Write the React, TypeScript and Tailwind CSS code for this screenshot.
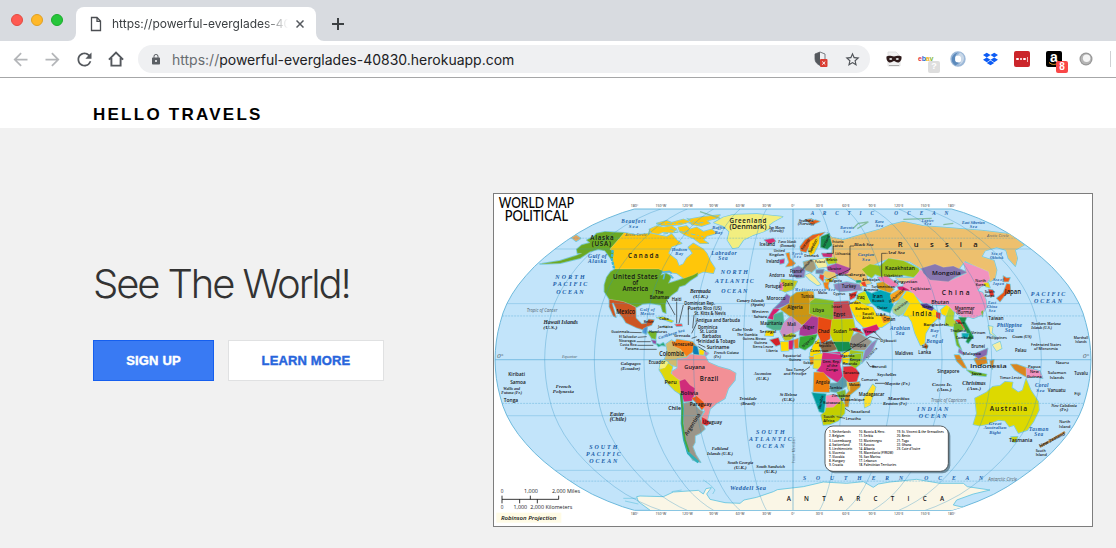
import React from "react";
import { MdArrowBack, MdArrowForward, MdRefresh, MdLock, MdStarBorder } from "react-icons/md";
import { FaDropbox } from "react-icons/fa";

type Shape = [fill: string, points: string];
type Label = [text: string, x: number, y: number, width: number, size?: number, kind?: string];

/* Robinson projection profile: [half width, distance from the equator] every 5 degrees */
const PX = [1, 0.9986, 0.9954, 0.99, 0.9822, 0.973, 0.96, 0.9427, 0.9216, 0.8962, 0.8679, 0.835, 0.7986, 0.7597, 0.7186, 0.6732, 0.6213, 0.5722, 0.5322];
const PY = [0, 0.062, 0.124, 0.186, 0.248, 0.31, 0.372, 0.434, 0.4958, 0.5571, 0.6176, 0.6769, 0.7346, 0.7903, 0.8435, 0.8936, 0.9394, 0.9761, 1];
const CX = 909, CY = 509, RX = 894, RY = 452;

function meridian(k: number): string[] {
  const pts: string[] = [];
  for (let i = 18; i >= 0; i--) pts.push(`${CX + k * RX * PX[i]},${CY - RY * PY[i]}`);
  for (let i = 1; i <= 18; i++) pts.push(`${CX + k * RX * PX[i]},${CY + RY * PY[i]}`);
  return pts;
}
const globe = [...meridian(-1), ...meridian(1).reverse()].join(" ");

const northWest: Shape[] = [
  ["#6aa823", "260,178 275,165 300,158 290,150 310,140 320,130 345,125 403,128 360,178 372,185 370,215 358,200 345,182 325,178 300,185 270,205 210,220 150,222 210,212 255,198 275,190 262,190"],
  ["#ffc60a", "403,128 440,135 480,130 530,140 545,132 560,150 575,160 545,170 535,190 560,210 567,228 580,222 590,205 608,190 595,172 610,160 640,178 650,190 662,215 675,235 670,250 640,245 625,252 600,262 585,268 560,250 520,245 505,237 375,237 368,215 372,185 360,178"],
  ["#ffc60a", "478,118 500,108 520,112 545,108 560,118 548,128 520,126 505,132 485,128"],
  ["#ffc60a", "500,100 530,92 545,98 580,88 600,95 570,104 540,106 515,106"],
  ["#ffc60a", "565,112 590,108 600,118 620,112 640,125 665,118 680,130 650,138 640,150 655,160 630,160 610,145 585,135 570,125"],
  ["#ffc60a", "595,88 640,80 690,75 680,85 650,92 660,100 635,108 605,103"],
  ["#6aa823", "375,237 505,237 520,243 512,256 528,250 545,258 535,280 560,272 585,264 610,255 625,247 622,258 600,272 585,285 568,290 562,303 545,315 530,330 526,345 528,370 518,365 512,345 480,340 458,342 440,352 420,343 400,335 358,328 343,305 343,285 350,262 362,245"],
  ["#cc5522", "358,328 400,335 420,343 437,352 438,385 455,402 470,400 476,388 492,390 485,405 470,410 462,420 440,413 408,398 400,385 380,360 370,338 366,340 378,382 370,378 358,350"],
  ["#4d94d8", "460,415 472,410 470,432 458,428"], ["#74b52c", "472,425 500,425 497,448 485,445 478,434"], ["#8a4aa5", "484,450 498,452 498,462 490,460"], ["#23a77c", "498,460 510,464 520,458 526,468 515,466 505,470"],
  ["#cfd100", "500,383 520,381 550,393 545,397 520,388"], ["#e83e4a", "555,403 575,402 577,408 560,409"], ["#e99a2a", "520,408 530,409 530,413"],
  ["#d2bb6e", "528,462 545,450 553,468 572,478 590,485 592,505 590,540 560,530 530,520 523,510 532,485"],
  ["#f57f17", "545,452 556,456 560,448 608,455 620,470 608,485 590,500 572,478 550,468"],
  ["#0a7eb4", "610,465 622,470 628,495 618,503 608,485"], ["#ffdb00", "628,478 643,482 640,497 628,497"], ["#b28bc4", "643,482 656,490 645,500"],
  ["#e3a35d", "245,143 258,135 272,145 258,154"],
];

const northEast: Shape[] = [
  ["#f2ee80", "72,98 100,82 130,74 200,72 278,80 250,95 237,105 240,115 220,125 190,135 160,150 145,172 128,175 112,150 118,125 100,108"],
  ["#d82a70", "223,150 250,145 257,154 238,162"], ["#e75e19", "345,90 365,86 360,96 375,90 390,94 368,104"],
  ["#edc06e", "412,128 425,142 460,150 500,138 545,125 570,118 600,105 640,95 700,108 780,114 880,122 960,132 1002,165 975,180 982,205 976,228 955,205 948,180 920,172 885,182 875,200 912,212 920,240 915,265 900,275 895,245 860,230 825,213 800,245 780,235 700,240 660,215 600,205 570,215 530,235 530,265 545,280 520,285 490,268 450,245 435,215 425,195 428,165"],
  ["#e75e19", "330,170 345,150 368,135 405,127 392,137 365,155 348,187 332,183"], ["#ffcf05", "360,155 388,135 387,160 372,190 360,198 355,178"], ["#178f4d", "393,140 418,130 426,165 412,178 392,172"],
  ["#ef7f1a", "288,190 298,188 300,205 316,220 308,227 288,230 297,217"], ["#c72d7a", "268,210 283,207 282,219 270,222"],
  ["#8a80b8", "305,238 325,228 346,240 342,262 320,264 312,258"], ["#c6c81c", "273,268 300,270 322,274 310,298 285,306 272,300"], ["#ed7caa", "269,277 281,278 279,300 269,300"],
  ["#a49a78", "340,216 370,208 378,235 365,247 345,240"], ["#f5eea0", "370,210 405,205 412,230 385,234"], ["#b4c818", "405,205 440,202 442,220 415,222"], ["#c72d7a", "395,190 428,190 425,202 400,200"],
  ["#b24c9f", "410,230 440,220 482,235 474,250 448,256 415,243"], ["#ebc76e", "405,243 435,248 440,265 410,265 398,255"], ["#6e81a8", "378,240 402,238 400,251 378,250"], ["#e84637", "390,253 402,256 400,275 388,263"],
  ["#f5eea0", "346,256 360,250 374,262 392,283 382,286 360,270"], ["#ef7f1a", "400,278 418,275 414,287 418,300 405,295"], ["#e7c40c", "405,268 428,265 426,275 408,276"],
  ["#8f84b8", "432,283 470,276 512,284 516,300 485,302 450,305 435,297"], ["#1fa080", "497,271 512,270 516,278 500,278"], ["#ee4224", "512,278 525,274 530,290 518,288"], ["#ffdb00", "509,280 518,286 512,290"],
  ["#9ac31c", "515,238 540,222 570,228 595,205 640,212 685,235 690,246 670,262 640,256 600,260 578,262 555,253 545,264 530,255"],
  ["#ee7db2", "563,262 590,258 625,284 612,293 570,272"], ["#d99b1b", "560,280 580,275 612,298 600,308 565,297"], ["#ebcf90", "618,264 672,264 672,276 635,280"], ["#d6206e", "622,290 655,288 662,302 628,302"],
  ["#f193c0", "690,240 700,242 720,262 780,272 830,250 820,215 860,230 895,245 900,265 885,285 872,290 862,302 878,308 888,330 890,350 875,375 850,385 835,380 822,385 790,362 770,345 740,345 700,340 675,316 655,298 640,290 640,278 672,264"],
  ["#8878b0", "693,235 735,222 760,232 790,228 832,247 795,262 775,275 720,270 700,250"],
  ["#00a6b8", "523,300 545,310 572,300 602,310 610,345 600,368 580,362 560,352 540,335 530,315"],
  ["#cde10c", "505,312 525,304 542,340 525,345 500,327"], ["#e3342d", "479,312 502,303 495,322 480,330"],
  ["#ffdb00", "477,345 500,330 525,345 548,352 560,375 602,382 600,395 575,412 520,412 500,390"], ["#d6206e", "518,416 560,403 568,417 528,439"], ["#f29418", "570,372 602,380 598,395 580,400"],
  ["#f6a51e", "600,315 625,300 645,303 625,330 606,340"], ["#a7cf8e", "608,355 628,330 648,312 662,335 640,370 625,378 610,368"],
  ["#ffdb00", "638,322 650,303 670,310 690,340 740,362 748,380 722,405 707,430 704,460 692,467 675,430 665,395 655,380 640,376 660,340"],
  ["#58439b", "690,342 710,340 732,355 726,363 700,353"], ["#e3342d", "738,365 752,370 750,388 738,382"], ["#ffdb00", "752,360 770,345 780,352 768,378 755,372"],
  ["#b6d42c", "768,378 778,350 793,368 790,388 802,400 788,410 765,405"], ["#e3342d", "795,390 812,388 835,420 838,435 812,405"], ["#1b904b", "806,382 830,382 825,395 850,440 835,460 828,455 836,438"], ["#6bb22c", "790,400 812,402 822,418 800,430 806,460 815,480 800,465 793,430"], ["#0aa9b5", "816,430 838,430 832,446 817,443"],
  ["#c7631d", "705,458 714,468 710,478 702,470"], ["#e7d70c", "880,278 895,278 900,293 888,290"], ["#e3342d", "895,298 908,300 912,315 902,322"],
  ["#e7571a", "940,258 950,264 960,263 955,275 941,275"], ["#e7571a", "950,281 960,283 962,305 945,315 930,335 920,325 940,308"], ["#6bb22c", "873,365 880,360 877,380"], ["#f5eea0", "895,408 908,410 905,428 918,440 900,430"], ["#f5eea0", "908,465 930,455 935,475 920,483"],
  ["#8768ae", "290,312 302,320 298,340 262,357 250,357 268,340"], ["#d6206e", "233,385 250,357 270,357 252,375 250,390"],
  ["#cc9512", "300,322 320,307 358,303 360,335 358,370 388,380 335,405 270,357 298,340"], ["#e9a629", "355,303 370,305 373,327 360,335"], ["#84bb26", "360,335 375,325 432,333 430,395 385,380 358,370"], ["#c4474f", "430,335 475,333 489,385 430,388"],
  ["#4db08c", "233,390 250,390 252,373 278,365 285,420 250,420 230,410"], ["#c88fc5", "280,400 303,378 335,405 330,420 298,435 285,452 270,425"], ["#a93b96", "330,415 365,378 388,383 382,430 350,440 328,435"], ["#e84a12", "385,380 426,390 420,447 395,462 383,430"], ["#c6ce00", "426,388 490,387 495,412 480,457 430,455 420,430"],
  ["#98948a", "485,440 505,427 545,455 525,480 490,480 478,465"], ["#8c84bb", "515,520 525,482 545,460 562,448 545,485"], ["#e3342d", "482,415 500,413 522,432 490,422"], ["#36a836", "330,440 382,433 370,462 345,480 325,472"],
  ["#ffdb00", "228,422 252,422 250,438 225,437"], ["#d2232a", "240,450 265,443 272,463 258,468"], ["#ffdb00", "272,455 296,455 296,482 274,483"], ["#b8c41e", "278,440 305,428 318,435 300,450 285,452"], ["#d6206e", "296,452 312,450 308,478 296,478"], ["#ee7b1e", "312,450 325,445 325,475 314,475"],
  ["#ffdb00", "360,490 370,465 388,445 390,485 400,510 362,510"], ["#8a6a48", "388,465 425,450 442,478 400,490"], ["#178f4d", "430,455 478,455 485,482 445,485"], ["#d42a80", "400,490 450,485 460,510 395,510"], ["#a3c31c", "480,480 520,485 515,515 475,515"], ["#ffe21c", "455,488 478,485 475,515 455,510"],
];

const southWest: Shape[] = [
  ["#f29096", "545,50 562,40 562,12 590,8 600,-2 645,2 655,22 685,35 720,45 737,55 735,75 715,100 705,130 680,145 660,162 652,195 635,185 645,170 640,155 620,130 600,110 585,85 570,75 548,68"],
  ["#ded70d", "508,45 525,35 535,25 548,35 542,55 560,70 572,78 572,118 555,107 530,82 515,55"], ["#f5ef7a", "512,20 522,15 535,22 525,38 508,42"],
  ["#d02c7a", "568,78 585,72 600,90 615,100 612,122 605,138 582,140 572,110"], ["#f05a16", "605,130 620,123 640,140 647,152 635,165 625,150"],
  ["#9b9589", "580,145 605,140 630,165 640,170 630,190 645,222 630,235 615,242 615,262 608,275 618,300 632,322 608,315 592,290 585,250 580,200"], ["#e32f36", "635,186 648,192 662,204 650,212 636,206"],
];

const southEast: Shape[] = [
  ["#f29418", "358,5 375,5 375,25 362,30"], ["#f0dd1c", "372,0 400,-5 390,42 370,40"], ["#d42a80", "398,-8 460,0 450,28 458,62 445,84 420,68 400,55 380,48 392,32"],
  ["#ef7f0d", "372,52 400,52 420,75 418,112 370,110"], ["#5b9aa8", "418,85 440,84 458,65 470,65 472,92 440,112 422,110"], ["#e0303a", "460,35 492,33 508,55 500,80 475,82 460,65"], ["#94c51c", "478,0 515,-5 510,28 495,40 478,28"], ["#ffdb00", "455,8 478,8 475,25 458,25"],
  ["#d18c1a", "475,85 508,80 510,95 480,120 475,155 463,155 465,122 480,105"], ["#82b82a", "440,112 465,105 468,125 450,133"], ["#e7d04c", "470,80 480,84 480,110 473,100"],
  ["#009a9d", "366,113 408,117 405,150 402,174 388,170"], ["#f58ab5", "408,122 435,118 455,140 432,158 410,165"], ["#c3ce00", "393,180 405,170 408,158 430,157 455,135 465,150 464,175 445,197 420,208 400,210"], ["#ffe02a", "522,130 548,88 557,97 540,150 524,158"],
  ["#ddd900", "855,130 890,112 908,95 930,92 945,80 968,82 965,98 985,112 998,106 1008,72 1022,105 1045,140 1047,165 1030,200 1012,225 985,234 972,210 958,215 945,197 925,195 895,207 868,212 850,208 860,175"],
  ["#c4cf12", "963,246 983,245 976,262 968,260"], ["#d98520", "793,0 808,0 830,40 820,38 800,18"], ["#d98520", "852,12 870,2 888,5 892,25 862,32"], ["#9170b4", "808,-20 822,-5 820,0 805,-8"], ["#8768ae", "850,-2 893,-20 890,0 865,12"], ["#d98520", "962,28 980,28 1008,38 1008,65 990,55 975,45"], ["#f193c0", "1008,38 1050,48 1058,70 1035,65 1010,68"],
  ["#6bb22c", "830,45 860,52 890,58 888,64 850,60"], ["#d98520", "900,18 912,14 907,42 902,30"],
];

const lines = [
  "M530 330L555 375M560 335V400M580 345L567 400M595 352V405M612 375L608 415M622 395L605 430M418 427L455 428M443 442L470 440M440 455H482M442 466H490M448 478H500",
  "M1012 270L1080 238V168H1092M1010 190H1030V168M1175 262V190H1190M1060 490L1140 440L1170 448M1152 425L1175 448M935 548L960 530M1130 515L1140 530H1158M1065 655L1080 665M1040 680L1065 685M1155 580H1185M620 440L605 445M632 455L618 450M646 472L625 462M647 484L625 470",
];

const labels: Label[] = [
  ["Alaska", 336, 151, 70, 18], ["(USA)", 334, 169, 58, 18], ["Canada", 460, 203, 92, 18], ["United States", 436, 266, 134, 18], ["of", 436, 285, 17, 17], ["America", 436, 303, 77, 18],
  ["Mexico", 407, 371, 56, 17], ["The", 508, 312, 26, 14], ["Bahamas", 508, 328, 58, 14], ["Haiti", 560, 332, 29, 12], ["Cuba", 522, 391, 28, 11], ["Belize", 476, 398, 30, 10], ["Jamaica", 526, 414, 44, 11], ["Honduras", 504, 429, 54, 11], ["Guatemala", 391, 429, 54, 11], ["El Salvador", 414, 443, 54, 11], ["Nicaragua", 412, 455, 50, 11], ["Costa Rica", 415, 468, 50, 11], ["Panama", 426, 479, 40, 11],
  ["Venezuela", 578, 468, 64, 14], ["Colombia", 545, 497, 74, 17], ["Dominican Rep.", 629, 345, 92, 12], ["Puerto Rico (US)", 644, 360, 102, 12], ["St. Kitts & Nevis", 660, 375, 94, 12], ["Antigua and Barbuda", 684, 397, 132, 13], ["Dominica", 653, 416, 58, 12], ["St. Lucia", 655, 429, 52, 12], ["Barbados", 665, 444, 56, 12], ["Trinidad & Tobago", 679, 460, 115, 12], ["Suriname", 684, 476, 68, 14], ["French Guiana", 709, 492, 74, 10, "i"], ["(Fr.)", 682, 505, 22, 10, "i"], ["Grenada", 577, 440, 48, 10],
  ["Greenland", 774, 99, 111, 18], ["(Denmark)", 774, 117, 111, 17], ["Iceland", 832, 169, 47, 14], ["Ireland", 848, 219, 39, 12], ["United", 868, 187, 34, 10], ["Kingdom", 860, 199, 44, 11], ["Jan Mayen", 860, 116, 48, 9, "i"], ["(Norway)", 860, 127, 42, 9, "i"], ["Faroe Islands", 892, 159, 54, 9, "i"], ["(Denmark)", 893, 170, 46, 9, "i"], ["Svalbard", 948, 95, 44, 10, "i"], ["(Norway)", 948, 106, 50, 9, "i"],
  ["France", 918, 248, 36, 12], ["Monaco", 916, 261, 38, 11], ["Andorra", 861, 262, 46, 12], ["Portugal", 850, 294, 49, 14], ["Spain", 893, 289, 32, 13], ["Morocco", 858, 330, 57, 13], ["Tunisia", 952, 325, 38, 12], ["Algeria", 915, 357, 47, 15], ["Libya", 985, 365, 34, 15], ["Egypt", 1048, 379, 35, 14], ["Israel", 1040, 355, 31, 11], ["Turkey", 1077, 294, 43, 14], ["Ukraine", 1033, 241, 40, 11], ["Poland", 990, 218, 30, 10], ["Belarus", 1025, 214, 33, 10], ["Lithuania", 1058, 196, 45, 10], ["Estonia", 1044, 159, 34, 10], ["Latvia", 1044, 170, 30, 10], ["Denmark", 965, 202, 44, 9], ["Bulgaria", 1036, 276, 40, 9], ["Malta", 998, 311, 28, 9], ["Cyprus", 1048, 315, 36, 9], ["Georgia", 1103, 258, 44, 10], ["Azerbaijan", 1143, 272, 52, 10], ["Armenia", 1143, 304, 44, 10], ["Moldova", 1065, 258, 38, 9],
  ["Western", 811, 370, 50, 11], ["Sahara", 811, 383, 40, 11], ["Mauritania", 844, 405, 66, 12], ["Mali", 905, 409, 26, 13], ["Niger", 956, 417, 34, 15], ["Chad", 1001, 428, 35, 16], ["Sudan", 1050, 430, 41, 15], ["Ethiopia", 1104, 470, 48, 12], ["Eritrea", 1095, 423, 36, 10], ["Senegal", 834, 428, 50, 11], ["The Gambia", 772, 439, 62, 10], ["Guinea-Bissau", 793, 449, 70, 10], ["Guinea", 812, 461, 40, 10], ["Sierra Leone", 819, 473, 62, 10], ["Liberia", 846, 487, 34, 10], ["Cabo Verde", 758, 422, 62, 9, "i"], ["Djibouti", 1195, 455, 48, 11], ["Uganda", 1072, 501, 42, 10], ["Cameroon", 988, 485, 54, 9], ["Central African", 1005, 461, 60, 9], ["Republic", 1005, 472, 38, 9], ["Burkina", 899, 440, 38, 9], ["Equatorial", 906, 500, 54, 9], ["Guinea", 915, 512, 36, 9],
  ["Saudi", 1134, 376, 34, 10], ["Arabia", 1134, 388, 34, 10], ["Iraq", 1112, 328, 24, 13], ["Iran", 1163, 323, 31, 15], ["Kuwait", 1165, 337, 36, 10], ["Qatar", 1177, 357, 32, 10], ["Bahrain", 1116, 360, 40, 10], ["U.A.E.", 1174, 377, 34, 10], ["Oman", 1198, 394, 36, 12], ["Yemen", 1141, 429, 36, 11], ["Jordan", 1094, 342, 36, 10], ["Syria", 1088, 318, 22, 9], ["Turkmenistan", 1179, 293, 70, 10], ["Uzbekistan", 1210, 260, 56, 11],
  ["Kazakhstan", 1230, 240, 90, 15], ["Kyrgyzstan", 1247, 278, 70, 11], ["Tajikistan", 1291, 300, 62, 11], ["Mongolia", 1369, 254, 86, 16], ["R u s s i a", 1343, 172, 240, 22], ["C h i n a", 1397, 315, 84, 19], ["India", 1296, 377, 58, 18], ["Bhutan", 1350, 342, 53, 13], ["Bangladesh", 1338, 407, 75, 11], ["Nepal", 1313, 353, 32, 9], ["Myanmar", 1424, 359, 60, 12], ["(Burma)", 1424, 372, 49, 12], ["Laos", 1410, 403, 28, 10], ["Thailand", 1404, 425, 46, 11], ["Vietnam", 1465, 432, 43, 11], ["Cambodia", 1424, 446, 54, 10], ["Brunei", 1464, 473, 41, 12], ["Malaysia", 1446, 496, 54, 11], ["Philippines", 1520, 446, 61, 11], ["Taiwan", 1518, 390, 45, 12], ["Japan", 1569, 313, 49, 17], ["North", 1472, 276, 32, 11], ["Korea", 1472, 288, 30, 11], ["South", 1499, 310, 30, 11], ["Korea", 1499, 321, 30, 10],
  ["Sri", 1304, 475, 18, 11], ["Lanka", 1304, 492, 38, 12], ["Maldives", 1242, 496, 54, 12], ["Palau", 1592, 486, 34, 12], ["Guam (US)", 1596, 445, 58, 10, "i"], ["Northern Mariana", 1668, 404, 88, 10, "i"], ["Islands (U.S.)", 1655, 416, 62, 10, "i"], ["Federated States", 1668, 469, 90, 11], ["of Micronesia", 1668, 480, 72, 11], ["Marshall", 1773, 447, 43, 10], ["Islands", 1773, 460, 34, 10],
  ["Kiribati", 80, 557, 50, 13], ["Samoa", 84, 583, 47, 13], ["Wallis and", 65, 600, 50, 10, "i"], ["Futuna (Fr.)", 65, 611, 62, 10, "i"], ["Tonga", 63, 635, 43, 13], ["Ecuador", 501, 522, 50, 12], ["Guyana", 614, 537, 62, 15], ["Peru", 542, 583, 37, 16], ["Bolivia", 598, 614, 53, 15], ["Brazil", 657, 572, 55, 18], ["Chile", 554, 661, 38, 15], ["Paraguay", 632, 649, 65, 12], ["Uruguay", 667, 702, 58, 13],
  ["Angola", 998, 583, 42, 12], ["Dem. Rep.", 1024, 518, 52, 11], ["of the", 1026, 531, 32, 11], ["Congo", 1026, 544, 36, 11], ["Gabon", 955, 521, 30, 9], ["Sao Tome", 915, 544, 54, 10], ["and Principe", 915, 556, 68, 10], ["Tanzania", 1083, 551, 50, 10], ["Kenya", 1095, 514, 32, 11], ["Rwanda", 1080, 524, 44, 9], ["Burundi", 1168, 534, 44, 10], ["Seychelles", 1190, 558, 58, 10, "i"], ["Comoros", 1139, 573, 50, 10], ["Malawi", 1094, 587, 36, 10], ["Zambia", 1037, 596, 38, 10], ["Zimbabwe", 1053, 620, 55, 10], ["Botswana", 1025, 642, 50, 11], ["Mozambique", 1088, 634, 72, 11], ["Madagascar", 1145, 618, 77, 14], ["South", 1017, 684, 33, 11], ["Africa", 1017, 696, 34, 11], ["Swaziland", 1111, 669, 58, 10], ["Lesotho", 1090, 690, 46, 10], ["Mauritius", 1226, 630, 66, 10, "i"], ["Reunion (Fr.)", 1215, 644, 72, 10, "i"], ["Mayotte (Fr.)", 1222, 586, 76, 10, "i"],
  ["Singapore", 1375, 550, 66, 12], ["Indonesia", 1495, 535, 110, 15], ["Java", 1460, 555, 30, 10], ["Timor-Leste", 1562, 567, 66, 9], ["Papua", 1633, 533, 38, 11], ["New", 1633, 548, 26, 11], ["Guinea", 1633, 563, 45, 11], ["Nauru", 1717, 522, 40, 11], ["Solomon", 1701, 551, 55, 11], ["Islands", 1701, 566, 43, 11], ["Tuvalu", 1773, 554, 41, 12], ["Vanuatu", 1700, 606, 54, 12], ["Fiji", 1762, 614, 19, 11], ["New Caledonia", 1722, 651, 76, 9, "i"], ["(Fr.)", 1722, 663, 26, 9, "i"], ["Australia", 1555, 663, 112, 19], ["Tasmania", 1592, 755, 70, 13], ["North", 1724, 700, 33, 11], ["Island", 1724, 713, 34, 11], ["South", 1652, 785, 30, 10], ["Island", 1654, 798, 34, 10],
  ["Hawaii Islands", 212, 403, 103, 15, "i"], ["(U.S.)", 181, 418, 42, 13, "i"], ["Bermuda", 631, 308, 62, 14, "i"], ["(U.K.)", 632, 325, 46, 13, "i"], ["Canary Islands", 781, 335, 82, 12, "i"], ["(Spain)", 803, 349, 42, 11, "i"], ["Galapagos", 422, 525, 60, 11, "i"], ["(Ecuador)", 421, 539, 58, 11, "i"], ["French", 220, 594, 46, 13, "i"], ["Polynesia", 220, 608, 63, 13, "i"], ["Easter", 381, 678, 43, 14, "i"], ["(Chile)", 384, 692, 50, 14, "i"], ["Ascension", 818, 556, 52, 11, "i"], ["(U.K.)", 818, 570, 38, 12, "i"], ["Trinidade", 774, 631, 52, 11, "i"], ["(Brazil)", 774, 645, 43, 11, "i"], ["St Helena", 895, 618, 52, 11, "i"], ["(U.K.)", 895, 632, 38, 11, "i"], ["Falkland", 690, 780, 50, 12, "i"], ["Islands (U.K.)", 690, 794, 78, 12, "i"], ["South Georgia", 751, 823, 77, 12, "i"], ["(U.K.)", 751, 837, 38, 11, "i"], ["South Sandwich", 842, 834, 86, 12, "i"], ["(U.K.)", 842, 848, 38, 11, "i"], ["Cocos Is.", 1356, 587, 60, 13, "i"], ["(Aus.)", 1363, 602, 44, 13, "i"], ["Christmas", 1452, 585, 70, 14, "i"], ["(Aus.)", 1452, 600, 42, 13, "i"],
  ["NORTH", 240, 267, 88, 16, "s"], ["PACIFIC", 240, 289, 104, 16, "s"], ["OCEAN", 240, 311, 82, 16, "s"], ["NORTH", 733, 251, 82, 16, "s"], ["ATLANTIC", 733, 280, 116, 16, "s"], ["OCEAN", 733, 309, 78, 16, "s"], ["PACIFIC", 1674, 318, 104, 16, "s"], ["OCEAN", 1674, 339, 84, 16, "s"], ["SOUTH", 340, 776, 84, 16, "s"], ["PACIFIC", 340, 798, 104, 16, "s"], ["OCEAN", 340, 819, 84, 16, "s"], ["SOUTH", 841, 732, 86, 16, "s"], ["ATLANTIC", 841, 753, 128, 16, "s"], ["OCEAN", 841, 775, 84, 16, "s"], ["INDIAN", 1328, 663, 94, 16, "s"], ["OCEAN", 1328, 685, 84, 16, "s"],
  ["A R C T I C", 1057, 75, 190, 14, "s"], ["O C E A N", 1294, 75, 162, 14, "s"], ["S O U T H E R N", 1089, 870, 300, 15, "s"], ["O C E A N", 1391, 870, 176, 15, "s"], ["Beaufort", 430, 100, 72, 14, "s"], ["Sea", 430, 114, 28, 13, "s"], ["Gulf of", 322, 204, 56, 15, "s"], ["Alaska", 322, 218, 56, 15, "s"], ["Hudson", 568, 183, 46, 12, "s"], ["Bay", 568, 196, 24, 12, "s"], ["Gulf of", 472, 363, 44, 11, "s"], ["Mexico", 472, 375, 42, 11, "s"], ["Baffin", 686, 118, 38, 12, "s"], ["Bay", 686, 131, 24, 12, "s"], ["Labrador", 702, 194, 76, 15, "s"], ["Sea", 699, 210, 28, 14, "s"], ["North", 922, 194, 32, 9, "s"], ["Sea", 922, 205, 22, 9, "s"], ["Caspian", 1128, 199, 48, 12, "s"], ["Sea", 1128, 212, 24, 12, "s"], ["Black Sea", 1121, 169, 58, 13, "i"], ["Aral Sea", 1218, 192, 52, 12, "i"], ["Mediterranean Sea", 975, 304, 120, 9, "s"], ["Barents", 1071, 117, 40, 10, "s"], ["Sea", 1071, 129, 22, 10, "s"], ["Kara", 1168, 100, 26, 11, "s"], ["Sea", 1168, 112, 22, 11, "s"], ["Laptev", 1313, 95, 36, 10, "s"], ["Sea", 1313, 106, 20, 10, "s"], ["East Siberian", 1450, 103, 68, 11, "s"], ["Sea", 1450, 115, 22, 11, "s"], ["Sea of", 1520, 195, 32, 10, "s"], ["Okhotsk", 1520, 206, 40, 10, "s"], ["Sea of", 1525, 273, 32, 10, "s"], ["Japan", 1525, 285, 34, 10, "s"], ["East", 1506, 342, 24, 10, "s"], ["China", 1506, 354, 30, 10, "s"], ["Sea", 1506, 366, 20, 10, "s"], ["Arabian", 1230, 421, 60, 14, "s"], ["Sea", 1230, 436, 26, 14, "s"], ["Bay", 1334, 427, 26, 13, "s"], ["of", 1334, 442, 14, 13, "s"], ["Bengal", 1334, 458, 50, 14, "s"], ["Philippine", 1558, 410, 76, 15, "s"], ["Sea", 1558, 427, 26, 14, "s"], ["Coral", 1655, 590, 40, 14, "s"], ["Sea", 1651, 606, 24, 13, "s"], ["Tasman", 1646, 723, 58, 14, "s"], ["Sea", 1646, 739, 26, 14, "s"], ["Great", 1515, 704, 38, 13, "s"], ["Australian", 1515, 718, 68, 13, "s"], ["Bight", 1515, 732, 34, 13, "s"], ["Weddell Sea", 774, 901, 108, 17, "s"],
  ["Tropic of Cancer", 156, 367, 92, 12, "g"], ["Arctic Circle", 438, 139, 64, 11, "g"], ["Arctic Circle", 1524, 140, 66, 11, "g"], ["Equator", 239, 505, 46, 11, "g"], ["Tropic of Capricorn", 1376, 636, 106, 12, "g"], ["Antarctic Circle", 1538, 872, 86, 12, "g"], ["0°", 31, 503, 20, 13, "g"], ["0°", 1788, 503, 20, 13, "g"],
  ["A N T A R C T I C A", 1126, 932, 472, 18],
  ["0", 36, 909, 8, 14, "m"], ["1,000", 123, 909, 42, 14, "m"], ["2,000 Miles", 228, 909, 84, 14, "m"], ["0", 36, 958, 8, 14, "m"], ["1,000", 91, 958, 41, 14, "m"], ["2,000 Kilometers", 184, 958, 126, 14, "m"],
];

const legend = [
  ["1. Netherlands", "2. Belgium", "3. Luxembourg", "4. Switzerland", "5. Liechtenstein", "6. Slovenia", "7. Slovakia", "8. Hungary", "9. Croatia"],
  ["10. Bosnia & Herz.", "11. Serbia", "12. Montenegro", "13. Kosovo", "14. Albania", "15. Macedonia (FYROM)", "16. San Marino", "17. Lebanon", "18. Palestinian Territories"],
  ["19. St. Vincent & the Grenadines", "20. Benin", "21. Togo", "22. Ghana", "23. Cote d'Ivoire"],
];
const degrees = ["180°", "150°W", "120°W", "90°W", "60°W", "30°W", "0°", "30°E", "60°E", "90°E", "120°E", "150°E", "180°"];

const kinds: Record<string, string> = {
  n: "fill-[#141417] font-semibold [font-family:'Open_Sans',sans-serif]",
  m: "fill-[#19191c] font-medium [font-family:'Open_Sans',sans-serif]",
  s: "fill-[#1a5ea8] italic font-bold [font-family:'Liberation_Serif',serif]",
  i: "fill-[#1c262e] italic font-bold [font-family:'Liberation_Serif',serif]",
  g: "fill-[#53636d] italic [font-family:'Open_Sans',sans-serif]",
};

function Land({ shapes, dx, dy }: { shapes: Shape[]; dx: number; dy: number }) {
  return (
    <g transform={`translate(${dx} ${dy})`} strokeLinejoin="round">
      {shapes.map(([, p], i) => <polygon key={i} points={p} fill="none" stroke="#63c4df" strokeWidth="4" />)}
      {shapes.map(([fill, p], i) => <polygon key={i} points={p} fill={fill} stroke="#f6e9c0" strokeOpacity=".55" strokeWidth="1" />)}
    </g>
  );
}

function MapLabel({ label: [t, x, y, w, size = 12, kind = "n"] }: { label: Label }) {
  /* large names and seas are letter-spaced, the small ones are set solid */
  const solid = kind !== "s" && size < 18;
  const scale = kind === "s" ? 1.12 : size < 18 ? 1.14 : 1.04;
  return (
    <text x={x} y={y} textAnchor="middle" fontSize={size * scale} textLength={w} lengthAdjust={solid ? "spacingAndGlyphs" : "spacing"} className={kinds[kind]}>
      {t}
    </text>
  );
}

function WorldMap() {
  const parallel = (deg: number) => {
    const i = Math.floor(deg / 5), t = deg / 5 - i;
    return { y: PY[i] + (PY[i + 1] - PY[i]) * t, x: PX[i] + (PX[i + 1] - PX[i]) * t };
  };
  return (
    <svg viewBox="9 9 1800 1002" className="block h-[334px] w-[600px] bg-white" role="img" aria-label="World map">
      <defs><clipPath id="globe"><polygon points={globe} /></clipPath></defs>
      <polygon points={globe} fill="#c2e4fa" stroke="#6db9dc" strokeWidth="3" />
      <g clipPath="url(#globe)">
        <polygon fill="#faf6e6" stroke="#63c4df" strokeWidth="2.5" points="440,920 450,918 520,920 550,906 625,901 640,912 648,896 664,893 650,912 660,928 705,938 750,940 762,930 800,922 850,905 862,899 940,890 1000,876 1070,880 1120,875 1150,892 1165,882 1200,876 1280,868 1350,880 1420,880 1432,890 1500,900 1450,912 1400,930 1390,945 1420,952 1400,975 500,975 445,935" />
        <path d="M400 925H440M405 933L445 942M640 870L660 884L675 900L668 912M545 905L575 900" stroke="#7ccbe4" strokeWidth="2.5" fill="none" />
        <Land shapes={northWest} dx={0} dy={0} />
        <Land shapes={northEast} dx={600} dy={0} />
        <Land shapes={southWest} dx={0} dy={495} />
        <Land shapes={southEast} dx={600} dy={495} />
        <path d="M573 610L578 655L576 700L583 750L595 790L625 817" stroke="#2fb0b8" strokeWidth="8" fill="none" />
        <path d="M573 610L577 655L577 700L585 750L597 785" stroke="#47a53d" strokeWidth="5" fill="none" />
        <path d="M368 180L365 205L372 235" stroke="#3fb7d2" strokeWidth="7" fill="none" strokeDasharray="9 3" />
        <path d="M515 247L538 244L545 250M524 252L520 268M540 255L550 265" stroke="#58b5df" strokeWidth="5" fill="none" />
        <path d="M1650 770L1685 750L1725 726" stroke="#b98b4d" strokeWidth="7" fill="none" />
        <path d="M1090 115L1105 100L1135 96L1115 108L1102 116M1360 104L1390 100M1325 85L1240 88M630 65L690 85M480 118L475 135" stroke="#83bca0" strokeWidth="4" fill="none" />
        <path d="M500 102L640 98M540 118L640 140M520 132L600 122M590 85L630 103" stroke="#79c5c9" strokeWidth="3" fill="none" strokeDasharray="14 6 5 7" />
        {[-5, -4, -3, -2, -1, 0, 1, 2, 3, 4, 5].map((k) => (
          <polyline key={k} points={meridian(k / 6).join(" ")} fill="none" stroke="#2d8fc4" strokeOpacity=".5" strokeWidth={k === 0 ? 3 : 2} />
        ))}
        {[0, 30, 60].flatMap((d) => [-1, 1].map((s) => {
          const { x, y } = parallel(d);
          return <line key={`${d}${s}`} x1={CX - RX * x} x2={CX + RX * x} y1={CY + s * RY * y} y2={CY + s * RY * y} stroke="#3d9dd0" strokeOpacity=".45" strokeWidth="2" />;
        }))}
        {[23.4, 66.5].flatMap((d) => [-1, 1].map((s) => {
          const { x, y } = parallel(d);
          return <line key={`${d}${s}`} x1={CX - RX * x} x2={CX + RX * x} y1={CY + s * RY * y} y2={CY + s * RY * y} stroke="#3d9dd0" strokeOpacity=".55" strokeWidth="2" strokeDasharray="6 3" />;
        }))}
      </g>
      {lines.map((d) => <path key={d} d={d} fill="none" stroke="#26282b" strokeWidth="2" />)}
      {labels.map((label, i) => <MapLabel key={i} label={label} />)}
      <g className="fill-[#19191c] font-semibold [font-family:'Open_Sans',sans-serif]">
        <text transform="translate(592 738) rotate(-58)" fontSize="16" textLength="76">Argentina</text>
        <text transform="translate(1650 773) rotate(-27)" fontSize="14" textLength="85">New Zealand</text>
        <text transform="translate(1217 365) rotate(-37)" fontSize="11" textLength="48">Pakistan</text>
        <text transform="translate(1200 340) rotate(-42)" fontSize="11" textLength="62">Afghanistan</text>
        <text transform="translate(962 190) rotate(-62)" fontSize="13" textLength="46">Sweden</text>
        <text transform="translate(938 180) rotate(-55)" fontSize="11" textLength="38">Norway</text>
        <text transform="translate(1004 173) rotate(-65)" fontSize="11" textLength="38">Finland</text>
        <text transform="translate(936 245) rotate(-48)" fontSize="11" textLength="46">Germany</text>
        <text transform="translate(940 473) rotate(-42)" fontSize="11" textLength="42">Nigeria</text>
        <text transform="translate(992 658) rotate(-78)" fontSize="11" textLength="42">Namibia</text>
        <text transform="translate(1133 508) rotate(-48)" fontSize="10" textLength="44">Somalia</text>
        <text transform="translate(915 820) rotate(-90)" fontSize="10" textLength="78" className="fill-[#53636d] font-normal">Prime Meridian</text>
      </g>
      <text transform="translate(506 448) rotate(-17)" fontSize="13" textLength="82" className="fill-[#1764ad] font-bold italic [font-family:'Liberation_Serif',serif]">Caribbean Sea</text>

      <g className="fill-[#26292c] font-medium [font-family:'Open_Sans',sans-serif]" fontSize="10.5" textAnchor="middle">
        {degrees.map((d, i) => {
          const x = CX + ((i - 6) / 6) * RX * 0.5322;
          return <g key={i}><text x={x} y="50">{d}</text><text x={x} y="976">{d}</text></g>;
        })}
      </g>
      <g fill="#050505" textAnchor="middle" className="font-medium [font-family:Lato,sans-serif]">
        <text x="139" y="54" fontSize="43" textLength="226" lengthAdjust="spacingAndGlyphs">WORLD MAP</text>
        <text x="139" y="92" fontSize="43" textLength="190" lengthAdjust="spacingAndGlyphs">POLITICAL</text>
      </g>
      <path d="M36 917V940M36 928H206M121 917V928M206 917V928M89 928V940M142 928V940" stroke="#111" strokeWidth="2.5" fill="none" />
      <rect x="19" y="968" width="195" height="30" fill="#fffbe5" />
      <text x="33" y="989" fontSize="17" textLength="166" lengthAdjust="spacingAndGlyphs" className="fill-[#111] font-semibold italic [font-family:'Open_Sans',sans-serif]">Robinson Projection</text>
      <rect x="1011" y="714" width="370" height="136" rx="24" fill="#4c6978" opacity=".7" />
      <rect x="1005" y="708" width="370" height="136" rx="24" fill="#fff" stroke="#3a3e42" strokeWidth="2.5" />
      <g className="fill-[#111] font-semibold [font-family:'Open_Sans',sans-serif]" fontSize="9.2">
        {legend.map((col, c) => col.map((t, r) => <text key={t} x={[1017, 1106, 1220][c]} y={730 + r * 12.4}>{t}</text>))}
      </g>
      <rect x="10.5" y="10.5" width="1797" height="999" fill="none" stroke="#7d7d7d" strokeWidth="3" />
    </svg>
  );
}

function Cell({ children }: { children: React.ReactNode }) {
  return <div className="flex h-8 w-8 shrink-0 items-center justify-center">{children}</div>;
}

function TabStrip() {
  return (
    <div className="flex h-[41px] items-end bg-[#d8dbe0]">
      <div className="flex h-full w-[68px] gap-2 pt-[14px] pl-[11px]">
        <span className="h-3 w-3 rounded-full border border-[#e24b41] bg-[#ff5a52]" />
        <span className="h-3 w-3 rounded-full border border-[#dfa023] bg-[#ffb829]" />
        <span className="h-3 w-3 rounded-full border border-[#1bac2c] bg-[#26c63b]" />
      </div>
      <svg viewBox="0 0 8 8" className="h-2 w-2"><path d="M8 0V8H0A8 8 0 0 0 8 0" fill="#fff" /></svg>
      <div className="flex h-[34px] w-[240px] items-center rounded-t-lg bg-white pl-[14px]">
        <svg viewBox="0 0 12 16" className="h-4 w-3 shrink-0" fill="none" stroke="#4b4e52" strokeWidth="1.3"><path d="M1.5 1.5H7L10.5 5V14.5H1.5ZM7 1.5V5.3H10.5" /></svg>
        <span className="ml-[10px] w-[176px] overflow-hidden [mask-image:linear-gradient(to_right,black_152px,transparent_176px)] [font-family:Inter,sans-serif] text-[12px] leading-5 whitespace-nowrap text-[#3c4043]">https://powerful-everglades-40830</span>
        <svg viewBox="0 0 8 8" className="ml-[8px] h-2 w-2 shrink-0" stroke="#55595e" strokeWidth="1.5"><path d="M.5 .5L7.5 7.5M7.5 .5L.5 7.5" /></svg>
      </div>
      <svg viewBox="0 0 8 8" className="h-2 w-2"><path d="M0 0V8H8A8 8 0 0 1 0 0" fill="#fff" /></svg>
      <svg viewBox="0 0 12 12" className="mb-[11px] ml-2 h-3 w-3" stroke="#3c4043" strokeWidth="2"><path d="M0 6H12M6 0V12" /></svg>
    </div>
  );
}

function Toolbar() {
  return (
    <div className="flex h-[37px] items-center border-b border-[#a6a7a8] bg-white pl-1">
      <Cell><MdArrowBack className="h-[21px] w-[21px] text-[#b4b6b9]" /></Cell>
      <Cell><MdArrowForward className="h-[21px] w-[21px] text-[#b4b6b9]" /></Cell>
      <Cell><MdRefresh className="h-[21px] w-[21px] text-[#54585d]" /></Cell>
      <Cell><svg viewBox="0 0 16 16" className="h-4 w-4" fill="none" stroke="#54585d" strokeWidth="1.9"><path d="M.9 8.7L8 1.6L15.1 8.7M3.4 7V14.6H12.6V7" /></svg></Cell>
      <div className="ml-[6px] flex h-7 w-[732px] items-center rounded-full bg-[#eff0f2] pl-3">
        <MdLock className="h-[13px] w-3 text-[#5b5f64]" />
        <span className="ml-[10px] [font-family:Inter,sans-serif] text-[14px] whitespace-nowrap text-[#202124]"><span className="text-[#686c70]">https://</span>powerful-everglades-40830.herokuapp.com</span>
        <div className="ml-auto flex pr-[2px]">
          <Cell>
            <svg viewBox="0 0 16 18" className="ml-[2px] h-[18px] w-4" fill="none">
              <path d="M7 2L12 4V9C12 12 10 14 7 15.5C4 14 2 12 2 9V4Z" stroke="#777b80" strokeWidth="1" /><path d="M7 2V15.5C4 14 2 12 2 9V4Z" fill="#55595e" />
              <rect x="7" y="9" width="7.5" height="8" rx="1" fill="#d93c31" /><path d="M9.2 11.5L12.3 14.6M12.3 11.5L9.2 14.6" stroke="#fff" strokeWidth="1" />
            </svg>
          </Cell>
          <Cell><MdStarBorder className="h-[17px] w-[17px] text-[#505459]" /></Cell>
        </div>
      </div>
      <div className="ml-2 flex">
        <Cell>
          <svg viewBox="0 0 16 16" className="h-4 w-4"><path d="M2 1H10L14 5V15H2Z" fill="#f2f2f2" stroke="#d8d8d8" strokeWidth=".7" /><path d="M3 14.5H13" stroke="#aaa" /><path d="M.5 5.5C3 4 6 5.5 8 5.5S13 4 15.5 5.5C16 9 14 11.5 12 11.5C10 11.5 9 10 8 10S6 11.5 4 11.5C2 11.5 0 9 .5 5.5Z" fill="#2e1a1a" /><ellipse cx="4.7" cy="8" rx="1.5" ry=".9" fill="#ddd" /><ellipse cx="11.3" cy="8" rx="1.5" ry=".9" fill="#ddd" /></svg>
        </Cell>
        <Cell>
          <div className="relative flex h-4 w-4 items-center font-['Liberation_Sans',sans-serif] text-[7px] font-bold tracking-[-0.2px]">
            <span className="text-[#e5323c]">e</span><span className="text-[#2968cf]">b</span><span className="text-[#eeb41d]">a</span><span className="text-[#86b838]">y</span>
            <span className="absolute top-[10px] left-[10px] flex h-3 w-3 items-center justify-center rounded-[2px] bg-[#dedede] text-[9px] text-white">?</span>
          </div>
        </Cell>
        <Cell>
          <svg viewBox="0 0 16 16" className="h-4 w-4" fill="none"><circle cx="8" cy="8" r="5.6" stroke="#9cb8d8" strokeWidth="4.2" /><path d="M5.5 14.5C-.5 11 1 3 8 1.5C4 5 4 10 9 12" fill="#5c8abc" /><path d="M10 1.5C16 4 15 12 9 14C12 11 12 6 8 4" fill="#c9d8e8" /><ellipse cx="8" cy="8" rx="2.4" ry="3.5" fill="#fff" transform="rotate(30 8 8)" /></svg>
        </Cell>
        <Cell><FaDropbox className="h-[16px] w-[15px] text-[#0d5cf5]" /></Cell>
        <Cell>
          <div className="flex h-4 w-4 items-center justify-center gap-px rounded-[2px] bg-[#cb252a]"><i className="h-[2.5px] w-[2.5px] rounded-full bg-white" /><i className="h-[2.5px] w-[2.5px] rounded-full bg-white" /><i className="h-[2.5px] w-[2.5px] rounded-full bg-white" /><i className="h-[5px] w-px bg-[#f2b5b5]" /></div>
        </Cell>
        <Cell>
          <div className="relative h-4 w-4 rounded-[2px] bg-black text-center font-['Liberation_Sans',sans-serif] text-[14px] leading-[12px] font-bold text-white">a
            <svg viewBox="0 0 16 16" className="absolute inset-0 h-4 w-4" fill="none" stroke="#f5a12c"><path d="M3 11.5C6 14 9 14 12 12" /></svg>
            <span className="absolute top-[10px] left-[10px] flex h-3 w-3 items-center justify-center rounded-[2px] bg-[#fa4748] text-[10px]">8</span>
          </div>
        </Cell>
        <Cell>
          <svg viewBox="0 0 16 16" className="h-4 w-4"><circle cx="8" cy="8" r="6.5" fill="#979797" /><circle cx="8" cy="8" r="5.3" fill="#b5b5b5" /><circle cx="8.6" cy="7.3" r="3.7" fill="#f5f5f5" /></svg>
        </Cell>
      </div>
      <div className="ml-2 h-4 w-px bg-[#cfd1d4]" />
    </div>
  );
}

export default function App() {
  return (
    <div className="flex h-[548px] w-[1116px] flex-col overflow-hidden bg-white">
      <TabStrip />
      <Toolbar />
      <header className="flex h-[50px] items-end bg-white pb-px pl-[93px]">
        <h1 className="font-['Liberation_Sans',sans-serif] text-[17px] leading-6 font-bold tracking-[2.25px] whitespace-nowrap text-black">HELLO TRAVELS</h1>
      </header>
      <main className="flex flex-1 items-start bg-[#f1f1f1] pl-[93px]">
        <section className="w-[400px] shrink-0 pt-[131px]">
          <h2 className="[font-family:Inter,sans-serif] text-[40px] leading-[50px] font-light tracking-[-2.1px] whitespace-nowrap text-[#333]">See The World!</h2>
          <div className="mt-[31px] flex gap-[14px] font-['Liberation_Sans',sans-serif] text-[13px] font-bold tracking-[0.15px]">
            <button className="h-[41px] w-[121px] border border-[#155fef] bg-[#397af3] text-white [-webkit-text-stroke:0.4px]">SIGN UP</button>
            <button className="h-[41px] w-[156px] border border-[#e0e1e2] bg-white text-[#2865dc] [-webkit-text-stroke:0.4px]">LEARN MORE</button>
          </div>
        </section>
        <div className="pt-[65px]"><WorldMap /></div>
      </main>
    </div>
  );
}
